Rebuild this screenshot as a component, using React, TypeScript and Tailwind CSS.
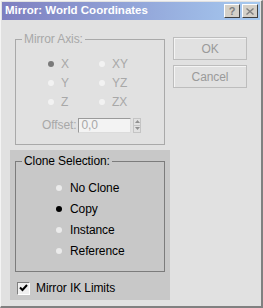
import React from "react";

function Dot({ on, disabled }: { on?: boolean; disabled?: boolean }) {
  const color = on ? (disabled ? "bg-[#7a7a7a]" : "bg-black") : disabled ? "bg-[#f2f2f2]" : "bg-[#ebebeb]";
  return <span className={`inline-block w-[6px] h-[6px] rounded-full ${color}`} />;
}

function AxisRadio({ label, on }: { label: string; on?: boolean }) {
  return (
    <div className="flex items-center h-[19px] gap-[7px]">
      <Dot on={on} disabled />
      <span className="text-[#a8a8a8] text-[12px]">{label}</span>
    </div>
  );
}

function CloneRadio({ label, on }: { label: string; on?: boolean }) {
  return (
    <div className="flex items-center h-[21px] gap-[8px]">
      <Dot on={on} />
      <span className="text-black text-[12px]">{label}</span>
    </div>
  );
}

function GrayButton({ children }: { children: React.ReactNode }) {
  return (
    <div className="h-[23px] w-[74px] flex items-center justify-center border border-[#bdbdbd] shadow-[inset_1px_1px_0_#f4f4f4] text-[#9a9a9a] text-[12px]">
      {children}
    </div>
  );
}

// group box with the caption sitting on the top border
function Group({
  title,
  lineColor,
  textColor,
  className,
  children,
}: {
  title: string;
  lineColor: string;
  textColor: string;
  className: string;
  children: React.ReactNode;
}) {
  return (
    <div className={`flex flex-col ${className}`}>
      <div className="flex h-[14px]">
        <div className={`w-[7px] h-[7px] self-end border-t border-l ${lineColor}`} />
        <span className={`px-[2px] text-[12px] leading-[14px] ${textColor}`}>{title}</span>
        <div className={`flex-1 h-[7px] self-end border-t border-r ${lineColor}`} />
      </div>
      <div className={`flex-1 border-l border-r border-b ${lineColor}`}>{children}</div>
    </div>
  );
}

export default function App() {
  return (
    <div
      className="w-[263px] h-[308px] bg-[#e1e1e1] border-l border-t border-[#f4f4f4] border-r-2 border-b-2 border-r-[#808080] border-b-[#808080] overflow-hidden text-[11px] tracking-[-0.1px]"
      style={{ fontFamily: '"Liberation Sans", Arial, sans-serif' }}
    >
      {/* Title bar */}
      <div className="mx-[1px] mt-[1px] h-[18px] bg-gradient-to-r from-[#7e7fc0] to-[#a6caf0] flex items-center justify-between pl-[3px] pr-[2px]">
        <span className="text-white font-bold text-[11.5px] tracking-normal">Mirror: World Coordinates</span>
        <div className="flex gap-[2px]">
          <div className="w-[16px] h-[14px] bg-[#d4d0c8] border border-t-white border-l-white border-r-[#404040] border-b-[#404040] flex items-center justify-center text-[11px] font-bold text-[#808080] leading-none">
            ?
          </div>
          <div className="w-[16px] h-[14px] bg-[#d4d0c8] border border-t-white border-l-white border-r-[#404040] border-b-[#404040] flex items-center justify-center text-[#808080]">
            <svg width="8" height="7" viewBox="0 0 8 7">
              <path d="M0.5 0.5 L7.5 6.5 M7.5 0.5 L0.5 6.5" stroke="currentColor" strokeWidth="1.4" />
            </svg>
          </div>
        </div>
      </div>

      <div className="flex">
        {/* Left column */}
        <div className="w-[160px] ml-[9px]">
          <Group
            title="Mirror Axis:"
            lineColor="border-[#a9a9a9]"
            textColor="text-[#a8a8a8]"
            className="mx-[5px] mt-[12px] h-[113px]"
          >
            <div className="grid grid-cols-[51px_40px] mt-[8px] pl-[32px]">
              <AxisRadio label="X" on />
              <AxisRadio label="XY" />
              <AxisRadio label="Y" />
              <AxisRadio label="YZ" />
              <AxisRadio label="Z" />
              <AxisRadio label="ZX" />
            </div>
            <div className="flex items-center mt-[5px] pl-[26px]">
              <span className="text-[#a8a8a8] text-[12px]">Offset:</span>
              <div className="ml-[2px] w-[53px] h-[15px] bg-[#f3f3f3] border border-t-[#9a9a9a] border-l-[#9a9a9a] border-r-[#dcdcdc] border-b-[#dcdcdc] flex items-center pl-[2px] text-[#a8a8a8] text-[12px]">
                0,0
              </div>
              <div className="ml-[2px] w-[8px] h-[15px] flex flex-col border border-[#c4c4c4]">
                <div className="flex-1 flex items-center justify-center border-b border-[#c4c4c4]">
                  <svg width="5" height="3" viewBox="0 0 5 3"><path d="M0 3 L2.5 0 L5 3Z" fill="#909090" /></svg>
                </div>
                <div className="flex-1 flex items-center justify-center">
                  <svg width="5" height="3" viewBox="0 0 5 3"><path d="M0 0 L2.5 3 L5 0Z" fill="#909090" /></svg>
                </div>
              </div>
            </div>
          </Group>

          {/* Clone panel */}
          <div className="mt-[5px] h-[150px] bg-[#c8c8c8] px-[5px] pt-[4px]">
            <Group title="Clone Selection:" lineColor="border-[#7c7c7c]" textColor="text-black" className="h-[118px]">
              <div className="mt-[9px] flex flex-col pl-[40px]">
                <CloneRadio label="No Clone" />
                <CloneRadio label="Copy" on />
                <CloneRadio label="Instance" />
                <CloneRadio label="Reference" />
              </div>
            </Group>
            <div className="flex items-center mt-[7px] ml-[2px] gap-[6px]">
              <div className="w-[13px] h-[13px] bg-[#f0f0f0] border border-t-[#808080] border-l-[#808080] border-r-white border-b-white flex items-center justify-center">
                <svg width="9" height="8" viewBox="0 0 9 8">
                  <path d="M1 3.5 L3.5 6 L8 1" stroke="black" strokeWidth="2" fill="none" />
                </svg>
              </div>
              <span className="text-black text-[12px]">Mirror IK Limits</span>
            </div>
          </div>
        </div>

        {/* Right column */}
        <div className="ml-[3px] mt-[17px] flex flex-col gap-[5px]">
          <GrayButton>OK</GrayButton>
          <GrayButton>Cancel</GrayButton>
        </div>
      </div>
    </div>
  );
}
